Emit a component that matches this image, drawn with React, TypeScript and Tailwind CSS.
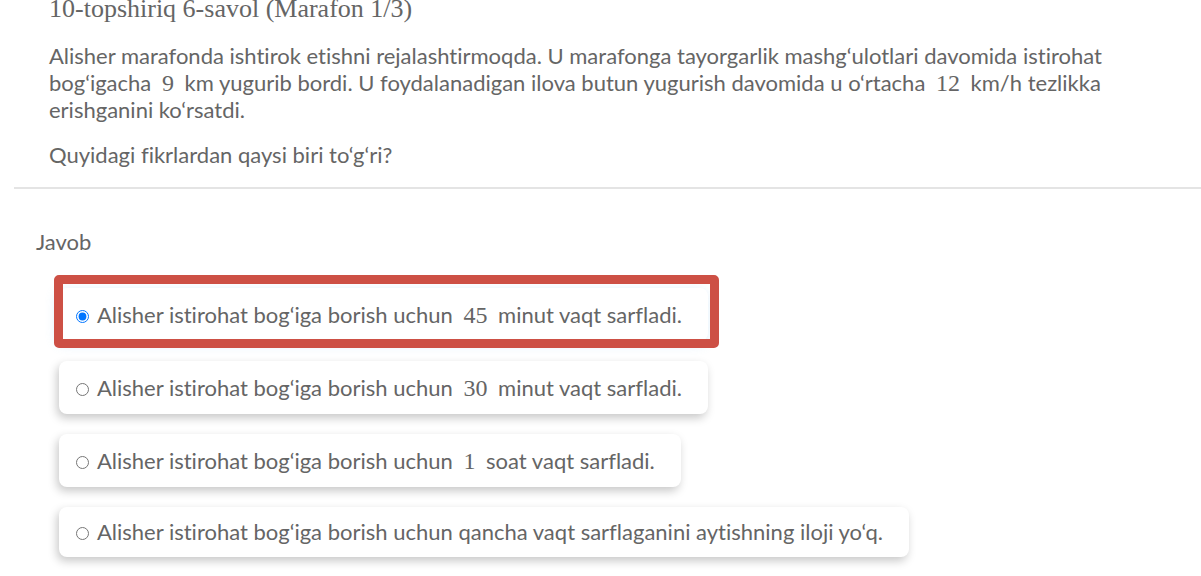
import { useState, type ReactNode } from "react";

function Num({ children }: { children: ReactNode }) {
  return (
    <span className="mx-[5px] font-['Liberation_Serif',serif] text-2xl leading-none">
      {children}
    </span>
  );
}

type Option = { id: string; content: ReactNode };

const options: Option[] = [
  {
    id: "min45",
    content: (
      <>
        Alisher istirohat bog‘iga borish uchun <Num>45</Num> minut vaqt sarfladi.
      </>
    ),
  },
  {
    id: "min30",
    content: (
      <>
        Alisher istirohat bog‘iga borish uchun <Num>30</Num> minut vaqt sarfladi.
      </>
    ),
  },
  {
    id: "hour1",
    content: (
      <>
        Alisher istirohat bog‘iga borish uchun <Num>1</Num> soat vaqt sarfladi.
      </>
    ),
  },
  {
    id: "unknown",
    content: (
      <>Alisher istirohat bog‘iga borish uchun qancha vaqt sarflaganini aytishning iloji yo‘q.</>
    ),
  },
];

export default function App() {
  const [selected, setSelected] = useState("min45");

  return (
    <main className="bg-white pb-5 font-['Lato',sans-serif] text-[22px] leading-[27px] text-[#656565] [font-variant-ligatures:none]">
      <section className="pr-16 pl-[49px]">
        <h1 className="font-['Liberation_Serif',serif] text-[26px] leading-[18px]">
          10-topshiriq 6-savol (Marafon 1/3)
        </h1>
        <p className="mt-6">
          Alisher marafonda ishtirok etishni rejalashtirmoqda. U marafonga tayorgarlik
          mashg‘ulotlari davomida istirohat bog‘igacha <Num>9</Num> km yugurib bordi. U
          foydalanadigan ilova butun yugurish davomida u o‘rtacha <Num>12</Num> km/h tezlikka
          erishganini ko‘rsatdi.
        </p>
        <p className="mt-[18px]">Quyidagi fikrlardan qaysi biri to‘g‘ri?</p>
      </section>

      <hr className="mt-[19px] ml-3.5 border-t-2 border-[#e4e4e4]" />

      <fieldset className="mt-[39px] pl-9">
        <legend className="pb-[33px]">Javob</legend>
        <div className="flex flex-col items-start gap-5 pl-[23px]">
          {options.map(({ id, content }) => {
            const checked = selected === id;
            return (
              <label
                key={id}
                htmlFor={id}
                className={`relative flex items-center gap-2 rounded-lg bg-white pr-[26px] pl-[17px] ${
                  id === "unknown" ? "pt-[11px] pb-3" : "py-[13px]"
                } ${
                  checked
                    ? "shadow-[-2px_3px_12px_rgba(120,190,240,0.3)]"
                    : "shadow-[-2px_4px_10px_rgba(0,0,0,0.22)]"
                }`}
              >
                <input
                  id={id}
                  type="radio"
                  name="javob"
                  value={id}
                  checked={checked}
                  onChange={() => setSelected(id)}
                  className="mt-[3px] size-[13px] shrink-0"
                />
                <span>{content}</span>
                {checked && (
                  <span className="pointer-events-none absolute -top-[13px] -right-[11px] -bottom-[7px] -left-[5px] rounded-[5px] border-9 border-[#cd5045]" />
                )}
              </label>
            );
          })}
        </div>
      </fieldset>
    </main>
  );
}
